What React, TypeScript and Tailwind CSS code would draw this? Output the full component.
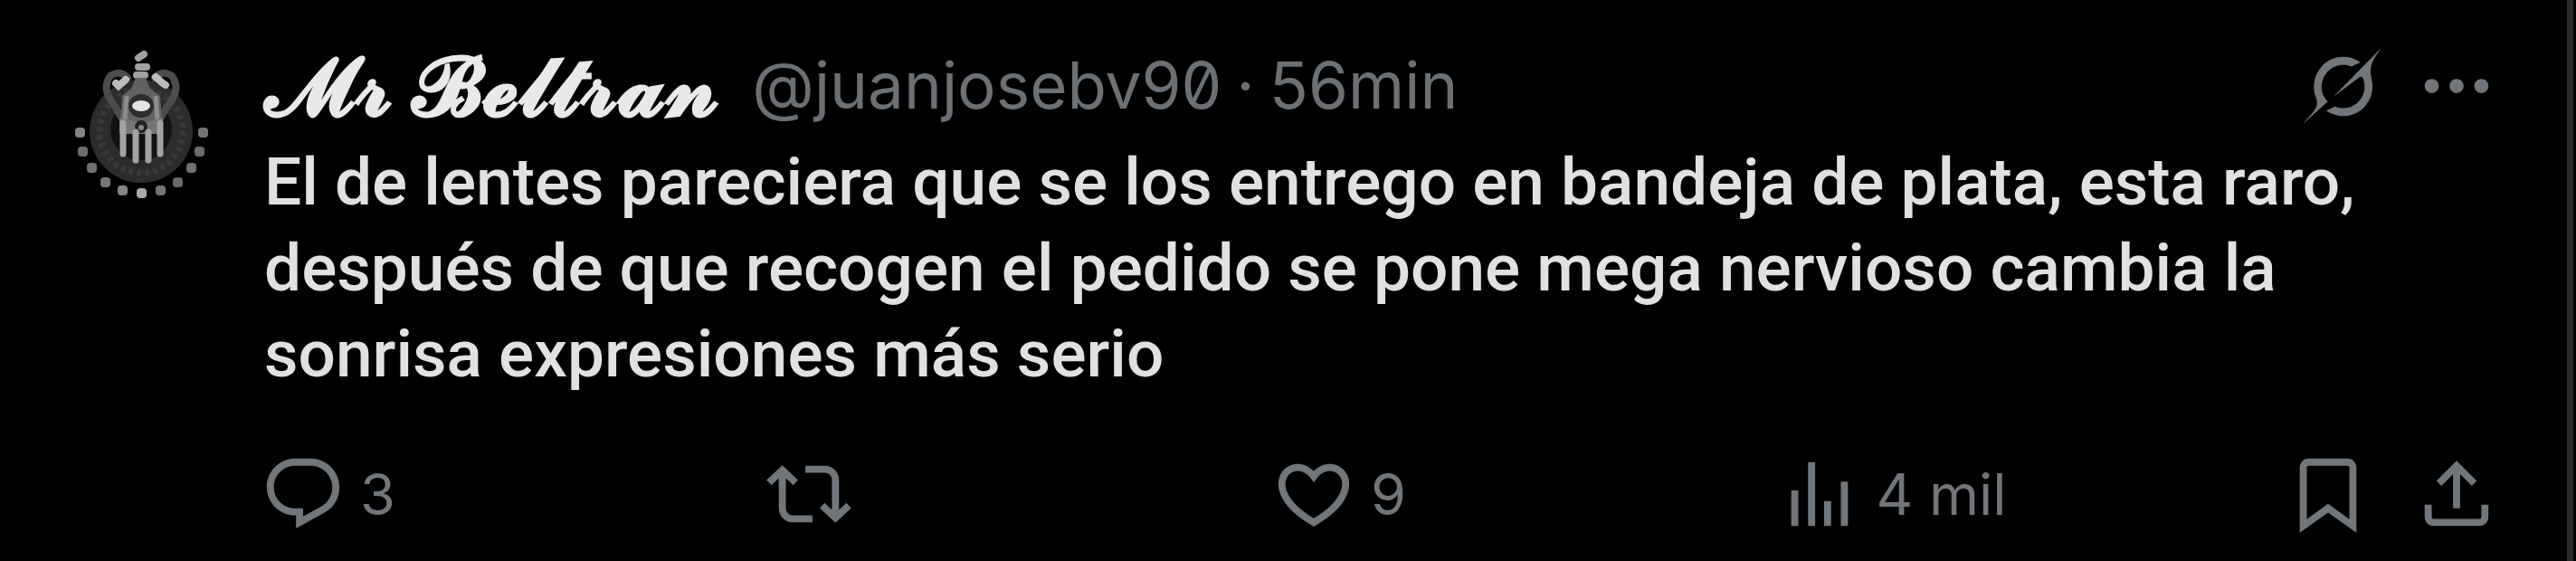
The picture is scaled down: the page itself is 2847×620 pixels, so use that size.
import type { ReactNode } from "react";

const ICONS = {
  reply:
    "M1.751 10c0-4.42 3.584-8 8.005-8h4.366c4.49 0 8.129 3.64 8.129 8.13 0 2.96-1.607 5.68-4.196 7.11l-8.054 4.46v-3.69h-.067c-4.49.1-8.183-3.51-8.183-8.01zm8.005-6c-3.317 0-6.005 2.69-6.005 6 0 3.37 2.77 6.08 6.138 6.01l.351-.01h1.761v2.3l5.087-2.81c1.951-1.08 3.163-3.13 3.163-5.36 0-3.39-2.744-6.13-6.129-6.13H9.756z",
  repost:
    "M4.5 3.88l4.432 4.14-1.364 1.46L5.5 7.55V16c0 1.1.896 2 2 2H13v2H7.5c-2.209 0-4-1.79-4-4V7.55L1.432 9.48.068 8.02 4.5 3.88zM16.5 6H11V4h5.5c2.209 0 4 1.79 4 4v8.45l2.068-1.93 1.364 1.46-4.432 4.14-4.432-4.14 1.364-1.46 2.068 1.93V8c0-1.1-.896-2-2-2z",
  like:
    "M16.697 5.5c-1.222-.06-2.679.51-3.89 2.16l-.805 1.09-.806-1.09C9.984 6.01 8.526 5.44 7.304 5.5c-1.243.07-2.349.78-2.91 1.91-.552 1.12-.633 2.78.479 4.82 1.074 1.97 3.257 4.27 7.129 6.61 3.87-2.34 6.052-4.64 7.126-6.61 1.111-2.04 1.03-3.7.477-4.82-.561-1.13-1.666-1.84-2.908-1.91zm4.187 7.69c-1.351 2.48-4.001 5.12-8.379 7.67l-.503.3-.504-.3c-4.379-2.55-7.029-5.19-8.382-7.67-1.36-2.5-1.41-4.86-.514-6.67.887-1.79 2.647-2.91 4.601-3.01 1.651-.09 3.368.56 4.798 2.01 1.429-1.45 3.146-2.1 4.796-2.01 1.954.1 3.714 1.22 4.601 3.01.896 1.81.846 4.17-.514 6.67z",
  views: "M8.75 21V3h2v18h-2zM18 21V8.5h2V21h-2zM4 21l.004-10h2L6 21H4zm9.248 0v-7h2v7h-2z",
  bookmark:
    "M4 4.5C4 3.12 5.119 2 6.5 2h11C18.881 2 20 3.12 20 4.5v18.44l-8-5.71-8 5.71V4.5zM6.5 4c-.276 0-.5.22-.5.5v14.56l6-4.29 6 4.29V4.5c0-.28-.224-.5-.5-.5h-11z",
  share:
    "M12 2.59l5.7 5.7-1.41 1.42L13 6.41V16h-2V6.41l-3.3 3.3-1.41-1.42L12 2.59zM21 15l-.02 3.51c0 1.38-1.12 2.49-2.5 2.49H5.5C4.11 21 3 19.88 3 18.5V15h2v3.5c0 .28.22.5.5.5h12.98c.28 0 .5-.22.5-.5L19 15h2z",
  more:
    "M3 12c0-1.1.9-2 2-2s2 .9 2 2-.9 2-2 2-2-.9-2-2zm9 2c1.1 0 2-.9 2-2s-.9-2-2-2-2 .9-2 2 .9 2 2 2zm7 0c1.1 0 2-.9 2-2s-.9-2-2-2-2 .9-2 2 .9 2 2 2z",
};

function Icon({ name }: { name: keyof typeof ICONS }) {
  return (
    <svg viewBox="0 0 24 24" className="size-[94px] shrink-0 fill-current" aria-hidden="true">
      <path d={ICONS[name]} />
    </svg>
  );
}

function GrokIcon() {
  return (
    <svg viewBox="0 0 33 32" className="w-[87px] h-[84px] fill-current" aria-hidden="true">
      <path d="M12.745 20.54l10.97-8.19c.539-.4 1.307-.244 1.564.38 1.349 3.288.746 7.241-1.938 9.955-2.683 2.714-6.417 3.31-9.83 1.954l-3.728 1.745c5.347 3.697 11.84 2.782 15.898-1.324 3.219-3.255 4.216-7.692 3.284-11.693l.008.009c-1.351-5.878.332-8.227 3.782-13.031L33 0l-4.54 4.59v-.014L12.743 20.544m-2.263 1.987c-3.837-3.707-3.175-9.446.1-12.755 2.42-2.449 6.388-3.448 9.852-1.979l3.72-1.737c-.67-.49-1.53-1.017-2.515-1.387-4.455-1.854-9.789-.931-13.41 2.728-3.483 3.523-4.579 8.94-2.697 13.561 1.405 3.454-.899 5.898-3.22 8.364C1.49 30.2.666 31.074 0 32l10.478-9.466" />
    </svg>
  );
}

// Stars under the club crest, left to right
const STARS = [
  [28, 116, "#858585"], [31, 137, "#6c6c6c"], [41, 155, "#707070"], [56, 171, "#767676"],
  [75, 180, "#858585"], [96, 183, "#aaaaaa"], [117, 180, "#757575"], [136, 171, "#6a6a6a"],
  [151, 155, "#707070"], [160, 137, "#6c6c6c"], [164, 116, "#757575"],
] as const;

function Avatar() {
  return (
    <svg viewBox="0 0 200 200" className="size-[200px] shrink-0" role="img" aria-label="Mr Beltran">
      <circle cx="96" cy="115" r="57" fill="#2c2c2c" />
      <circle cx="96" cy="115" r="46" fill="none" stroke="#383838" strokeWidth="7" strokeDasharray="5 4" />
      <circle cx="96" cy="113" r="34" fill="#121212" />
      {/* scrolls on both sides of the helmet */}
      <g fill="none" strokeLinecap="round">
        <path d="M73 98C67 84 55 76 58 63c2-13 15-16 23-7" stroke="#4c4c4c" strokeWidth="8" />
        <path d="M119 98c6-14 18-22 15-35-2-13-15-16-23-7" stroke="#4c4c4c" strokeWidth="8" />
        <path d="M68 62l3 3 8-7" stroke="#bcbcbc" strokeWidth="8" />
        <path d="M123 64l-3-2-8-7" stroke="#bcbcbc" strokeWidth="8" />
        <path d="M93 34l6-4M93 44h9M91 53h9" stroke="#a0a0a0" strokeWidth="8" />
      </g>
      {/* helmet and shield */}
      <path d="M90 56h11l5 12 11 8 3 36H72l3-36 10-8z" fill="#626262" />
      <path d="M80 76l-2 26M112 76l2 26" stroke="#8c8c8c" strokeWidth="5" />
      <ellipse cx="96" cy="87" rx="14" ry="13" fill="#2c2c2c" />
      <ellipse cx="96" cy="87" rx="10" ry="6" fill="#e4e4e4" />
      <path d="M72 100l24 6 24-6v18H72z" fill="#767676" />
      <circle cx="96" cy="110" r="7" fill="#222222" />
      <circle cx="96" cy="111" r="3" fill="#888888" />
      <path d="M76 106v34M90 116v31M104 116v31M117 106v34" stroke="#a2a2a2" strokeWidth="7" strokeLinecap="round" />
      {STARS.map(([x, y, fill]) => (
        <rect key={x} x={x - 5} y={y - 5} width="11" height="11" rx="4" fill={fill} />
      ))}
    </svg>
  );
}

function Action({ label, count, children }: { label: string; count?: string; children: ReactNode }) {
  return (
    <div className="flex-1">
      <button className="flex items-center gap-4 text-[63px] leading-none" aria-label={label}>
        {children}
        {count && <span>{count}</span>}
      </button>
    </div>
  );
}

export default function App() {
  return (
    <div className="min-h-screen bg-black pr-[3px] flex">
      <article className="flex-1 flex gap-7 border-r-[7px] border-[#2a2d30] pl-[60px] pr-[75px] pt-[30px] font-['Inter',sans-serif]">
        <Avatar />
        <div className="flex-1 min-w-0 pt-[17px]">
          <header className="flex items-center h-[95px] pl-1 text-[71px] leading-[95px] text-[#6b7075] whitespace-nowrap">
            <a href="#" className="text-[90px] font-bold text-[#e7e9ea]">𝓜𝓻 𝓑𝓮𝓵𝓽𝓻𝓪𝓷</a>
            <a href="#" className="ml-9 slashed-zero">@juanjosebv90</a>
            <span className="mx-4">·</span>
            <a href="#"><time>56min</time></a>
            <div className="ml-auto flex items-center gap-9 text-[#71767b]">
              <button aria-label="Grok"><GrokIcon /></button>
              <button aria-label="Más opciones"><Icon name="more" /></button>
            </div>
          </header>

          <p className="mt-3 pl-1 font-['Roboto',sans-serif] font-medium text-[73px] leading-[95px] text-[#dfe1e2]">
            El de lentes pareciera que se los entrego en bandeja de plata, esta raro, después de que
            recogen el pedido se pone mega nervioso cambia la sonrisa expresiones más serio
          </p>

          <div className="mt-[60px] flex items-center text-[#71767b]">
            <Action label="Responder" count="3"><Icon name="reply" /></Action>
            <Action label="Repostear"><Icon name="repost" /></Action>
            <Action label="Me gusta" count="9"><Icon name="like" /></Action>
            <Action label="Ver estadísticas" count="4 mil"><Icon name="views" /></Action>
            <div className="flex gap-12 pl-1">
              <button aria-label="Guardar"><Icon name="bookmark" /></button>
              <button aria-label="Compartir"><Icon name="share" /></button>
            </div>
          </div>
        </div>
      </article>
    </div>
  );
}
